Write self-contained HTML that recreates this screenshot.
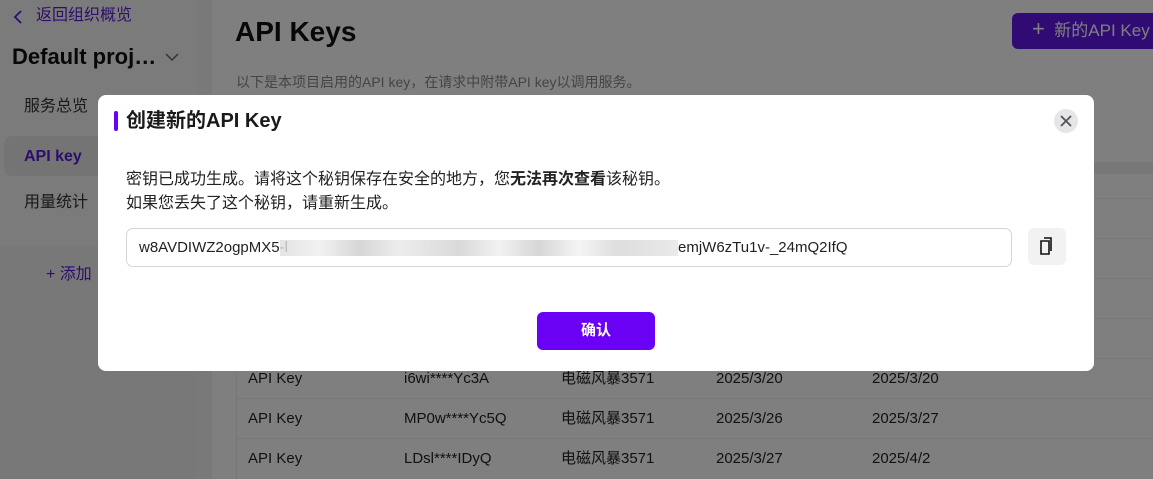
<!DOCTYPE html>
<html><head><meta charset="utf-8"><style>
*{margin:0;padding:0;box-sizing:border-box}
body{width:1153px;height:479px;overflow:hidden;position:relative;background:#fff;font-family:"Liberation Sans","Noto Sans CJK SC",sans-serif;color:#1a1a1a}
.abs{position:absolute}
.t{position:absolute;white-space:nowrap;line-height:1.2}
.row{position:absolute;left:236px;width:917px;height:40px;border-top:1px solid #eee;font-size:15px;color:#222}
.row span{position:absolute;top:11px;line-height:18px}
</style></head><body>
<div class="abs" style="left:0;top:0;width:196px;height:479px;background:#f7f7f7"></div>
<div class="abs" style="left:196px;top:0;width:16px;height:479px;background:#f3f3f3"></div>
<div class="abs" style="left:0;top:246px;width:196px;height:233px;background:#f1f1f1"></div>
<svg class="abs" style="left:12px;top:9px" width="12" height="16"><path d="M9 2L3 8L9 14" fill="none" stroke="#5a1ad6" stroke-width="1.8"/></svg>
<div class="t" style="left:36px;top:6px;font-size:16px;color:#5a1ad6">返回组织概览</div>
<div class="t" style="left:12px;top:44px;font-size:22px;font-weight:bold;color:#111">Default proj…</div>
<svg class="abs" style="left:164px;top:50px" width="16" height="14"><path d="M2 4L8 10L14 4" fill="none" stroke="#666" stroke-width="1.5"/></svg>
<div class="t" style="left:24px;top:97px;font-size:16px;color:#333">服务总览</div>
<div class="abs" style="left:4px;top:136px;width:190px;height:40px;background:#e9e9e9;border-radius:8px"></div>
<div class="t" style="left:24px;top:147px;font-size:16px;font-weight:bold;color:#5a1ad6">API key</div>
<div class="t" style="left:24px;top:193px;font-size:16px;color:#333">用量统计</div>
<div class="t" style="left:46px;top:265px;font-size:16px;color:#5a1ad6">+ 添加</div>
<div class="t" style="left:235px;top:15px;font-size:28px;font-weight:bold;color:#111">API Keys</div>
<div class="t" style="left:236px;top:74px;font-size:14px;color:#888">以下是本项目启用的API key，在请求中附带API key以调用服务。</div>
<div class="abs" style="left:1012px;top:13px;width:150px;height:36px;background:#6216e8;border-radius:6px"></div>
<div class="t" style="left:1032px;top:20px;font-size:17px;color:#ffffff"><span style="font-size:22px;line-height:18px">+</span>&nbsp;&nbsp;新的API Key</div>
<div class="abs" style="left:236px;top:162px;width:917px;height:12px;background:#eee"></div>
<div class="row" style="top:198px"></div><div class="row" style="top:238px"></div><div class="row" style="top:278px"></div><div class="row" style="top:318px"></div>
<div class="row" style="top:358px"><span style="left:12px">API Key</span><span style="left:168px">i6wi****Yc3A</span><span style="left:325px">电磁风暴3571</span><span style="left:480px">2025/3/20</span><span style="left:636px">2025/3/20</span></div>
<div class="row" style="top:398px"><span style="left:12px">API Key</span><span style="left:168px">MP0w****Yc5Q</span><span style="left:325px">电磁风暴3571</span><span style="left:480px">2025/3/26</span><span style="left:636px">2025/3/27</span></div>
<div class="row" style="top:438px"><span style="left:12px">API Key</span><span style="left:168px">LDsl****IDyQ</span><span style="left:325px">电磁风暴3571</span><span style="left:480px">2025/3/27</span><span style="left:636px">2025/4/2</span></div>
<div class="abs" style="left:236px;top:358px;width:1px;height:121px;background:#eee"></div>

<div class="abs" style="left:0;top:0;width:1153px;height:479px;background:rgba(0,0,0,0.5)"></div>

<div class="abs" style="left:98px;top:95px;width:996px;height:276px;background:#fff;border-radius:8px"></div>
<div class="abs" style="left:114px;top:111px;width:4px;height:20px;background:#6a00f4;border-radius:2px"></div>
<div class="t" style="left:126px;top:109px;font-size:20px;font-weight:bold;color:#1a1a1a">创建新的API Key</div>
<div class="abs" style="left:1054px;top:109px;width:24px;height:24px;border-radius:50%;background:#e6e6e8"></div>
<svg class="abs" style="left:1054px;top:109px" width="24" height="24"><path d="M7 7L17 17M17 7L7 17" stroke="#555" stroke-width="1.8"/></svg>
<div class="t" style="left:126px;top:168px;font-size:16px;color:#222;line-height:24px">密钥已成功生成。请将这个秘钥保存在安全的地方，您<b>无法再次查看</b>该秘钥。<br>如果您丢失了这个秘钥，请重新生成。</div>
<div class="abs" style="left:126px;top:228px;width:886px;height:39px;border:1px solid #d4d6dc;border-radius:7px"></div>
<div class="t" style="left:139px;top:239px;font-size:15px;color:#222">w8AVDIWZ2ogpMX5-l</div>
<div class="abs" style="left:280px;top:240px;width:398px;height:16px;background:linear-gradient(90deg,#ddd,#eee 10%,#ccc 20%,#e8e8e8 30%,#d0d0d0 45%,#eee 55%,#ccc 65%,#f2f2f2 75%,#d5d5d5 85%,#e5e5e5);opacity:.8"></div>
<div class="t" style="left:678px;top:239px;font-size:15px;color:#222">emjW6zTu1v-_24mQ2IfQ</div>
<div class="abs" style="left:1028px;top:228px;width:38px;height:37px;background:#f2f2f3;border-radius:6px"></div>
<svg class="abs" style="left:1028px;top:228px" width="38" height="37"><path d="M13 13h8v13h-8z" fill="none" stroke="#111" stroke-width="1.6"/><path d="M16 10h7v13" fill="none" stroke="#111" stroke-width="1.6"/></svg>
<div class="abs" style="left:537px;top:312px;width:118px;height:38px;background:#6a00f4;border-radius:6px;color:#fff;font-size:15px;font-weight:bold;text-align:center;line-height:38px">确认</div>
</body></html>
